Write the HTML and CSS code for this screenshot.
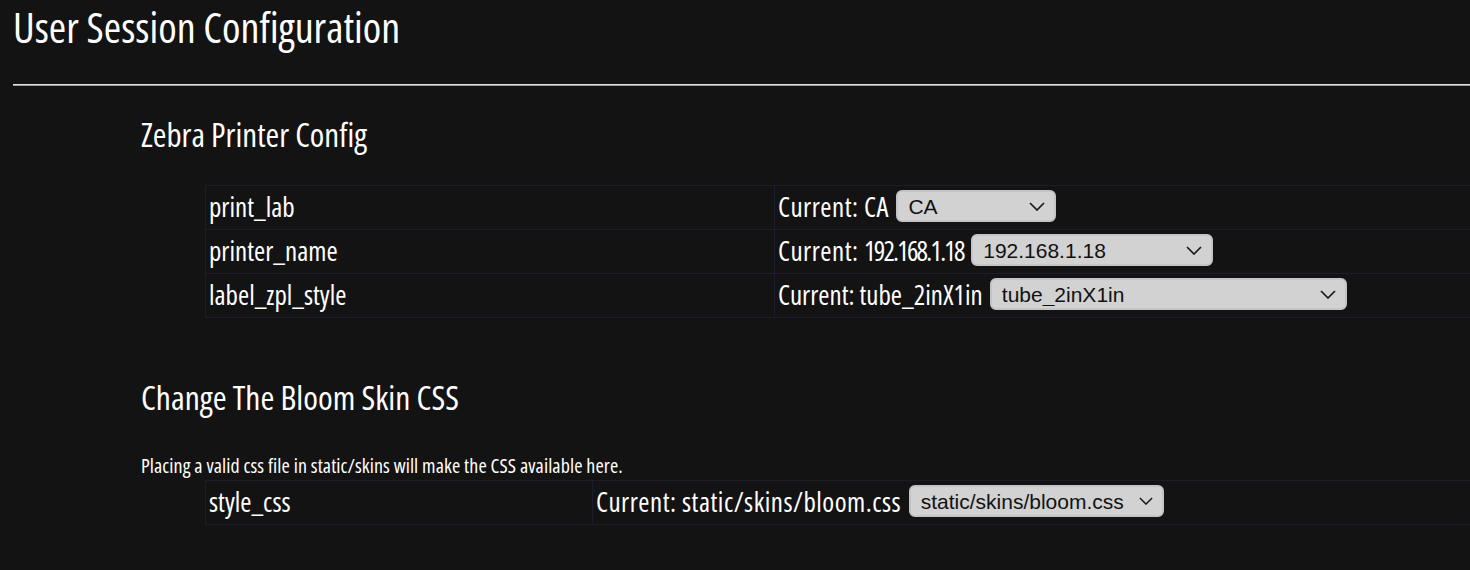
FILE: index.html
```html
<!DOCTYPE html>
<html lang="en">
<head>
<meta charset="utf-8">
<title>User Session Configuration</title>
<link rel="stylesheet" href="styles.css">
</head>
<body>
<h1 class="page-title">User Session Configuration</h1>
<hr class="rule">

<section class="section">
  <h2 class="section-title">Zebra Printer Config</h2>
  <table class="cfg-table zebra">
    <tr>
      <td class="key">print_lab</td>
      <td class="val">Current: CA
        <span class="select-wrap"><select class="sel w-ca"><option>CA</option></select><svg class="chev" viewBox="0 0 16 9"><path d="M1 1l7 7 7-7"/></svg></span>
      </td>
    </tr>
    <tr>
      <td class="key">printer_name</td>
      <td class="val">Current: <span class="digits">192.168.1.18</span>
        <span class="select-wrap"><select class="sel w-ip"><option>192.168.1.18</option></select><svg class="chev" viewBox="0 0 16 9"><path d="M1 1l7 7 7-7"/></svg></span>
      </td>
    </tr>
    <tr>
      <td class="key">label_zpl_style</td>
      <td class="val tight">Current: tube_2inX1in
        <span class="select-wrap"><select class="sel w-tube"><option>tube_2inX1in</option></select><svg class="chev" viewBox="0 0 16 9"><path d="M1 1l7 7 7-7"/></svg></span>
      </td>
    </tr>
  </table>

  <h2 class="section-title second">Change The Bloom Skin CSS</h2>
  <p class="note">Placing a valid css file in static/skins will make the CSS available here.</p>
  <table class="cfg-table skin">
    <tr>
      <td class="key">style_css</td>
      <td class="val">Current: static/skins/bloom.css
        <span class="select-wrap"><select class="sel w-css"><option>static/skins/bloom.css</option></select><svg class="chev small" viewBox="0 0 16 9"><path d="M1 1l7 7 7-7"/></svg></span>
      </td>
    </tr>
  </table>
</section>
</body>
</html>
```

FILE: styles.css
```css
html {
  overflow: hidden;
  background: #131313;
}
body {
  margin: 0;
  padding: 3px 0 0 13px;
  background: #131313;
  color: #ffffff;
  font-family: "Open Sans", "DejaVu Sans Condensed", sans-serif;
  font-stretch: 78%;
}
.page-title {
  margin: 0;
  font-size: 42px;
  line-height: 47px;
  font-weight: normal;
}
.rule {
  margin: 34px 0 0 0;
  height: 0;
  border: 0;
  border-top: 1px solid #e2e2e2;
  border-bottom: 1px solid #9c9c9c;
}
.section {
  padding-left: 128px;
}
.section-title {
  margin: 30px 0 0 0;
  font-size: 33px;
  line-height: 37px;
  font-weight: normal;
}
.section-title.second {
  margin-top: 61px;
  font-size: 33.5px;
}
.note {
  margin: 38px 0 0 0;
  font-size: 20px;
  line-height: 24px;
  letter-spacing: 0.1px;
}
.cfg-table {
  margin: 32px 0 0 64px;
  width: 100%;
  border-collapse: collapse;
  font-size: 27px;
}
.skin {
  margin-top: 2px;
}
.cfg-table td {
  border: 1px solid #1c1c2c;
  height: 40px;
  padding: 0 3px 3px 3px;
  vertical-align: middle;
  white-space: nowrap;
}
.zebra .key { width: 562px; }
.skin .key { width: 380px; }
.val {
  letter-spacing: 0.5px;
}
.val.tight {
  letter-spacing: 0;
}
.digits {
  letter-spacing: -1.8px;
}
.select-wrap {
  position: relative;
  display: inline-block;
  vertical-align: 3px;
  margin-left: 2px;
  letter-spacing: normal;
}
.sel {
  appearance: none;
  -webkit-appearance: none;
  display: block;
  height: 32px;
  margin: 0;
  padding: 0 30px 0 10px;
  border: 2px solid #c4c4c4;
  border-radius: 6px;
  background: #d2d2d2;
  color: #111;
  font-family: "Liberation Sans", Arial, sans-serif;
  font-stretch: normal;
  font-size: 21px;
  letter-spacing: normal;
}
.w-ca { width: 160px; }
.w-ip { width: 242px; }
.w-tube { width: 357px; }
.w-css { width: 255px; padding-right: 24px; }
.chev {
  position: absolute;
  right: 11px;
  top: 12px;
  width: 16px;
  height: 9px;
  fill: none;
  stroke: #1a1a1a;
  stroke-width: 1.7;
  pointer-events: none;
}
.chev.small {
  right: 11px;
  width: 14px;
  height: 8px;
}
```
